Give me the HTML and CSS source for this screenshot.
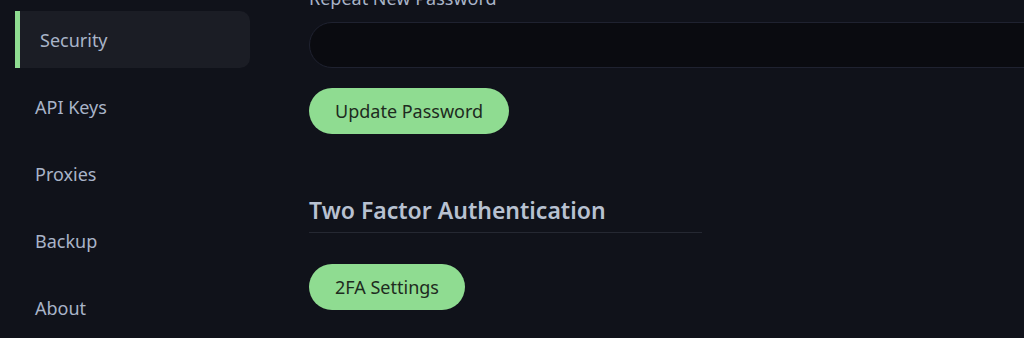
FILE: index.html
```html
<!DOCTYPE html>
<html lang="en">
<head>
  <meta charset="UTF-8">
  <meta name="viewport" content="width=device-width, initial-scale=1.0">
  <title>Settings</title>
  <link rel="stylesheet" href="styles.css">
</head>
<body>
  <div class="settings-layout">
    <nav class="settings-nav">
      <a class="nav-item active" href="#">Security</a>
      <a class="nav-item" href="#">API Keys</a>
      <a class="nav-item" href="#">Proxies</a>
      <a class="nav-item" href="#">Backup</a>
      <a class="nav-item" href="#">About</a>
    </nav>

    <main class="settings-content">
      <div class="form-group">
        <label for="repeat-password">Repeat New Password</label>
        <input type="password" id="repeat-password">
      </div>
      <button class="btn-primary">Update Password</button>

      <h2 class="section-title">Two Factor Authentication</h2>
      <button class="btn-primary">2FA Settings</button>
    </main>
  </div>
</body>
</html>
```

FILE: styles.css
```css
/* General Styling */
body {
  font-family: "Noto Sans", "Open Sans", sans-serif;
  margin: 0;
  padding: 0;
  background-color: #10121a;
  color: #a9b4c8;
  height: 338px;
  overflow: hidden;
}

.settings-layout {
  display: flex;
}

/* Sidebar */
.settings-nav {
  display: flex;
  flex-direction: column;
  gap: 10px;
  width: 235px;
  padding: 11px 0 0 15px;
  flex-shrink: 0;
}

.nav-item {
  display: flex;
  align-items: center;
  height: 57px;
  padding-left: 20px;
  font-size: 18px;
  color: #a9b4c8;
  text-decoration: none;
  border-radius: 0 10px 10px 0;
}

.nav-item.active {
  background-color: #1b1d25;
  border-left: 5px solid #8fdc91;
}

/* Main content */
.settings-content {
  flex: 1;
  margin-left: 59px;
  margin-top: -14px;
}

.form-group {
  display: flex;
  flex-direction: column;
  gap: 12px;
  margin-bottom: 20px;
}

.form-group label {
  font-size: 18px;
  line-height: 24px;
  color: #a9b4c8;
}

.form-group input {
  height: 46px;
  box-sizing: border-box;
  width: 760px;
  background-color: #0a0b10;
  border: 1px solid #1f2230;
  border-radius: 23px;
  padding: 0 20px;
  color: #c8d0de;
  font-size: 16px;
  outline: none;
}

.btn-primary {
  display: block;
  height: 46px;
  padding: 0 26px;
  background-color: #8fdc91;
  color: #1e2b20;
  border: none;
  border-radius: 23px;
  font-family: inherit;
  font-size: 18px;
  cursor: pointer;
}

.section-title {
  width: 393px;
  margin: 61px 0 31px;
  padding-bottom: 7px;
  font-size: 23px;
  line-height: 30px;
  font-weight: 600;
  color: #b8c1d1;
  border-bottom: 1px solid #252832;
}
```
